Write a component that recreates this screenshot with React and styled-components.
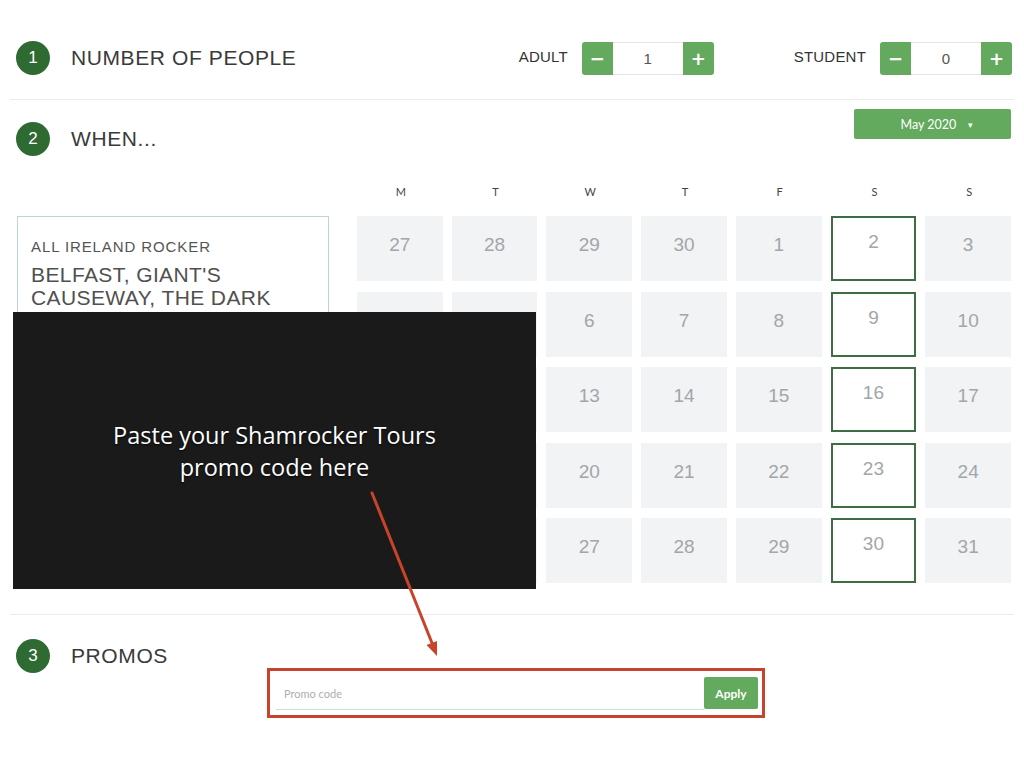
import React from "react";
import styled, { createGlobalStyle } from "styled-components";

const GlobalStyle = createGlobalStyle`
  body {
    margin: 0;
    background: #fff;
    font-family: "Liberation Sans", Arial, sans-serif;
  }
`;

const weekdays = ["M", "T", "W", "T", "F", "S", "S"];

const days = [
  [27, 28, 29, 30, 1, 2, 3],
  [4, 5, 6, 7, 8, 9, 10],
  [11, 12, 13, 14, 15, 16, 17],
  [18, 19, 20, 21, 22, 23, 24],
  [25, 26, 27, 28, 29, 30, 31],
];

// dates that can be booked get the green outline
const isOpen = (row, col) => col === 5 || (col === 0 && row >= 3);

function Counter({ label, value }) {
  return (
    <CounterGroup>
      <CounterLabel>{label}</CounterLabel>
      <Stepper>
        <StepButton side="left">−</StepButton>
        <StepValue>{value}</StepValue>
        <StepButton side="right">+</StepButton>
      </Stepper>
    </CounterGroup>
  );
}

function StepTitle({ num, children }) {
  return (
    <TitleRow>
      <StepBadge>{num}</StepBadge>
      <TitleText>{children}</TitleText>
    </TitleRow>
  );
}

function App() {
  return (
    <Page>
      <GlobalStyle />
      <PeopleSection>
        <StepTitle num="1">NUMBER OF PEOPLE</StepTitle>
        <Counters>
          <Counter label="ADULT" value="1" />
          <Counter label="STUDENT" value="0" />
        </Counters>
      </PeopleSection>

      <WhenSection>
        <WhenHeader>
          <TitleHolder>
            <StepTitle num="2">WHEN...</StepTitle>
          </TitleHolder>
          <MonthButton>
            May 2020 <Caret>▾</Caret>
          </MonthButton>
        </WhenHeader>
        <WhenBody>
          <TourCard>
            <TourTag>ALL IRELAND ROCKER</TourTag>
            <TourTitle>
              BELFAST, GIANT'S
              <br />
              CAUSEWAY, THE DARK
              <br />
              HEDGES, CLIFFS OF
              <br />
              MOHER, GALWAY,
              <br />
              BLARNEY CASTLE AND
              <br />
              INIS MOR
            </TourTitle>
            <TourMeta>Duration: 9 Days</TourMeta>
            <TourText>
              Our all-island adventure brings you to every corner of Ireland,
              north and south. Walk the Giant's Causeway, wander the Dark
              Hedges and stand on the edge of the Cliffs of Moher. Explore
              Galway, kiss the Blarney Stone and cycle around Inis Mor. You
              will see more in nine days than most do in a month, with
              nights out in lively pubs along the way.
            </TourText>
            <TourLink>ALL IRELAND ROCKER</TourLink>
          </TourCard>

          <Calendar>
            <Weekdays>
              {weekdays.map((d, i) => (
                <Weekday key={i}>{d}</Weekday>
              ))}
            </Weekdays>
            <DayGrid>
              {days.map((week, r) =>
                week.map((d, c) => (
                  <DayCell key={`${r}-${c}`} open={isOpen(r, c)}>
                    {d}
                  </DayCell>
                ))
              )}
            </DayGrid>
          </Calendar>
        </WhenBody>
      </WhenSection>

      <PromoSection>
        <StepTitle num="3">PROMOS</StepTitle>
        <PromoHighlight>
          <PromoInput placeholder="Promo code" />
          <ApplyButton>Apply</ApplyButton>
        </PromoHighlight>
      </PromoSection>

      <Tip>
        <TipText>
          Paste your Shamrocker Tours
          <br />
          promo code here
        </TipText>
      </Tip>
      <Arrow width="90" height="180" viewBox="0 0 90 180">
        <line
          x1="12"
          y1="8"
          x2="72"
          y2="158"
          stroke="#c9432b"
          strokeWidth="3"
          strokeLinecap="round"
        />
        <polygon points="77,171 66.5,160 77,156" fill="#c9432b" />
      </Arrow>
    </Page>
  );
}

const green = "#63a95e";

const Page = styled.div`
  position: relative;
  width: 1024px;
  height: 768px;
  box-sizing: border-box;
  padding: 0 10px;
  overflow: hidden;
`;

const PeopleSection = styled.section`
  display: flex;
  align-items: center;
  justify-content: space-between;
  height: 100px;
  box-sizing: border-box;
  padding: 17px 2px 0 6px;
  border-bottom: 1px solid #ececec;
`;

const TitleRow = styled.div`
  display: flex;
  align-items: center;
  gap: 21px;
`;

const StepBadge = styled.div`
  width: 34px;
  height: 34px;
  border-radius: 50%;
  background: #2e6a32;
  color: #fff;
  display: flex;
  align-items: center;
  justify-content: center;
  font-size: 17px;
`;

const TitleText = styled.h2`
  margin: 0;
  font-size: 21px;
  font-weight: normal;
  letter-spacing: 0.6px;
  color: #3a3a3a;
`;

const Counters = styled.div`
  display: flex;
  align-items: center;
  gap: 80px;
`;

const CounterGroup = styled.div`
  display: flex;
  align-items: center;
  gap: 14px;
`;

const CounterLabel = styled.span`
  font-size: 15px;
  letter-spacing: 0.2px;
  color: #333;
  margin-bottom: 3px;
`;

const Stepper = styled.div`
  display: flex;
  height: 33px;
`;

const StepButton = styled.button`
  width: 31px;
  height: 33px;
  border: none;
  padding: 0;
  background: ${green};
  color: #fff;
  font-family: "DejaVu Sans", sans-serif;
  font-size: 18px;
  font-weight: bold;
  border-radius: ${(p) => (p.side === "left" ? "3px 0 0 3px" : "0 3px 3px 0")};
`;

const StepValue = styled.div`
  width: 70px;
  box-sizing: border-box;
  border-top: 1px solid #e4e4e4;
  border-bottom: 1px solid #e4e4e4;
  display: flex;
  align-items: center;
  justify-content: center;
  font-size: 15px;
  color: #555;
`;

const WhenSection = styled.section`
  padding: 9px 3px 31px 6px;
  border-bottom: 1px solid #ececec;
`;

const WhenHeader = styled.div`
  display: flex;
  justify-content: space-between;
  align-items: flex-start;
`;

const TitleHolder = styled.div`
  margin-top: 13px;
`;

const MonthButton = styled.button`
  width: 157px;
  height: 30px;
  border: none;
  border-radius: 2px;
  background: ${green};
  color: #fff;
  font-family: Lato, "Open Sans", sans-serif;
  font-size: 12.5px;
  padding: 0 0 0 8px;
`;

const Caret = styled.span`
  font-size: 9px;
  margin-left: 8px;
  vertical-align: 1px;
`;

const WhenBody = styled.div`
  display: flex;
  gap: 28px;
`;

const TourCard = styled.div`
  width: 312px;
  height: 367px;
  flex: none;
  box-sizing: border-box;
  overflow: hidden;
  margin: 60px 0 0 1px;
  padding: 21px 12px 0 13px;
  border: 1px solid #b9d6d0;
  color: #555;
`;

const TourTag = styled.div`
  font-size: 15px;
  line-height: 18px;
  letter-spacing: 0.9px;
  color: #555;
`;

const TourTitle = styled.h3`
  margin: 8px 0 0;
  font-size: 21px;
  line-height: 22.6px;
  font-weight: normal;
  letter-spacing: 0.4px;
  color: #505050;
`;

const TourMeta = styled.div`
  margin-top: 3px;
  font-size: 12px;
  line-height: 16px;
  color: #666;
`;

const TourText = styled.p`
  margin: 9px 0 0;
  font-size: 11px;
  line-height: 17.5px;
  color: #555;
`;

const TourLink = styled.div`
  margin-top: 8px;
  font-size: 12px;
  font-weight: bold;
  line-height: 16px;
  color: #333;
`;

const Calendar = styled.div`
  flex: 1;
`;

const Weekdays = styled.div`
  display: grid;
  grid-template-columns: repeat(7, 1fr);
  column-gap: 9px;
  margin: 29px 0 17px;
`;

const Weekday = styled.div`
  text-align: center;
  font-family: Lato, "Open Sans", sans-serif;
  font-size: 11px;
  line-height: 14px;
  color: #444;
  padding-left: 2px;
`;

const DayGrid = styled.div`
  display: grid;
  grid-template-columns: repeat(7, 1fr);
  grid-auto-rows: 65px;
  column-gap: 9px;
  row-gap: 10.5px;
`;

const DayCell = styled.div`
  box-sizing: border-box;
  display: flex;
  justify-content: center;
  align-items: flex-start;
  padding-top: ${(p) => (p.open ? "13px" : "18px")};
  font-size: 19px;
  line-height: 22px;
  color: #a2a6aa;
  background: ${(p) => (p.open ? "#fff" : "#f2f3f4")};
  border: ${(p) => (p.open ? "2px solid #3f6d43" : "none")};
`;

const PromoSection = styled.section`
  padding: 24px 0 0 6px;
`;

const PromoHighlight = styled.div`
  display: flex;
  width: 498px;
  box-sizing: border-box;
  margin: -5px 0 0 251px;
  padding: 6px 4px 5px 6px;
  border: 3px solid #c8432c;
`;

const PromoInput = styled.input`
  flex: 1;
  height: 33px;
  box-sizing: border-box;
  border: none;
  border-bottom: 1px solid #bfe2da;
  padding: 0 8px;
  font-family: Lato, "Open Sans", sans-serif;
  font-size: 11px;
  outline: none;
  &::placeholder {
    color: #aeaeae;
  }
`;

const ApplyButton = styled.button`
  width: 54px;
  height: 32px;
  border: none;
  border-radius: 2px;
  background: ${green};
  color: #fff;
  font-family: Lato, "Open Sans", sans-serif;
  font-size: 12px;
  font-weight: bold;
`;

const Tip = styled.div`
  position: absolute;
  z-index: 5;
  left: 13px;
  top: 312px;
  width: 523px;
  height: 277px;
  background: #1a1a1a;
  display: flex;
  align-items: center;
  justify-content: center;
`;

const TipText = styled.p`
  margin: 0;
  text-align: center;
  font-family: "Open Sans", sans-serif;
  font-size: 23.5px;
  line-height: 32px;
  color: #fff;
  text-shadow: 0 1px 2px rgba(0, 0, 0, 0.8);
`;

const Arrow = styled.svg`
  position: absolute;
  z-index: 6;
  left: 360px;
  top: 485px;
`;

export default App;
